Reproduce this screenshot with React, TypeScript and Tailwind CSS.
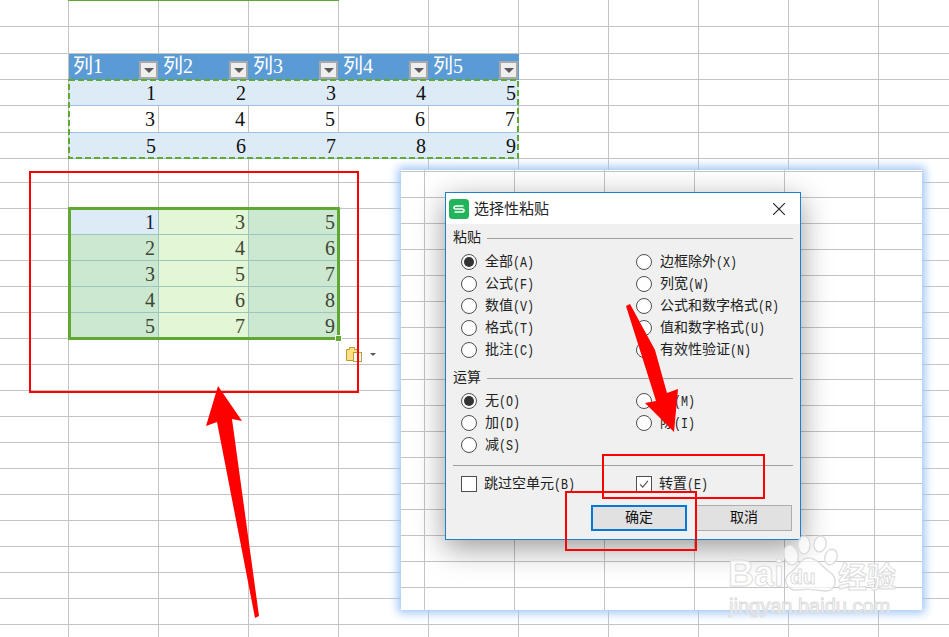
const CJK = "font-['Liberation_Mono','Noto_Sans_CJK_SC',monospace]";

// row heights follow the screenshot, which is two spliced captures
const sheetRows =
  'grid-rows-[27px_27px_26px_26px_27px_26px_24px_26px_26px_26px_26px_26px_26px_26px_26px_26px_26px_26px_26px_26px_26px_26px_26px_26px_26px_26px_26px]';

const headers = ['列1', '列2', '列3', '列4', '列5'];
const tableRows = [
  [1, 2, 3, 4, 5],
  [3, 4, 5, 6, 7],
  [5, 6, 7, 8, 9],
];
const pasted = [
  [1, 3, 5],
  [2, 4, 6],
  [3, 5, 7],
  [4, 6, 8],
  [5, 7, 9],
];

function FilterButton() {
  return (
    <span className="mr-px flex h-[18px] w-[19px] items-center justify-center border-2 border-[#a9a9a9] bg-[#eeeeee]">
      <span className="h-0 w-0 border-x-[5px] border-t-[5px] border-x-transparent border-t-[#595959]" />
    </span>
  );
}

function EmptyCells({ count }: { count: number }) {
  return (
    <>
      {Array.from({ length: count }).map((_, i) => (
        <div key={i} className="border-r border-b border-[#c4c4c4]" />
      ))}
    </>
  );
}

function NumberCell({ value, className }: { value: number; className: string }) {
  return (
    <div className={`flex items-center justify-end pr-[3px] font-['Liberation_Serif',serif] text-[20px] leading-none ${className}`}>
      {value}
    </div>
  );
}

function MainSheet() {
  return (
    <div className={`grid grid-cols-[69px_repeat(10,90px)] ${sheetRows}`}>
      <EmptyCells count={22} />

      <div className="border-r border-b border-[#c4c4c4]" />
      {headers.map((h) => (
        <div key={h} className="flex items-end justify-between bg-[#5b9bd5] pb-px pl-[4px] font-['Liberation_Serif','Noto_Sans_CJK_SC',serif] text-[20px] leading-[26px] text-white">
          <span>{h}</span>
          <FilterButton />
        </div>
      ))}
      <EmptyCells count={5} />

      {tableRows.map((row, r) => (
        <div key={r} className="contents">
          <div className="border-r border-b border-[#c4c4c4]" />
          {row.map((n, c) => (
            <NumberCell
              key={c}
              value={n}
              className={`border-b border-[#9bc2e6] text-[#111] ${r % 2 === 0 ? 'bg-[#ddebf7]' : 'border-r border-r-[#c4c4c4] bg-white'}`}
            />
          ))}
          <EmptyCells count={5} />
        </div>
      ))}

      <EmptyCells count={22} />

      {pasted.map((row, r) => (
        <div key={r} className="contents">
          <div className="border-r border-b border-[#c4c4c4]" />
          {row.map((n, c) => (
            <NumberCell
              key={c}
              value={n}
              className={`border-r border-b border-[#9cc5c0] ${
                r === 0 && c === 0
                  ? 'bg-[#ddebf7] text-[#14233a]'
                  : c === 1
                    ? 'bg-[#e3f6d6] text-[#3c4634]'
                    : 'bg-[#cce8d0] text-[#3c4634]'
              }`}
            />
          ))}
          <EmptyCells count={7} />
        </div>
      ))}

      <EmptyCells count={11 * 12} />
    </div>
  );
}

function PanelSheet() {
  return (
    <div className="grid grid-cols-[24px_repeat(6,90px)] grid-rows-[2px_26px_26px_26px_26px_26px_26px_26px_26px_26px_26px_26px_26px_26px_26px_26px_26px_26px_26px]">
      <EmptyCells count={7 * 19} />
    </div>
  );
}

function Label({ label, hint }: { label: string; hint: string }) {
  return (
    <span className={`${CJK} text-[14px] leading-none whitespace-nowrap text-[#222]`}>
      {label}
      <span className="inline-block scale-y-125 text-[11.67px]">({hint})</span>
    </span>
  );
}

function Radio({ label, hint, checked }: { label: string; hint: string; checked?: boolean }) {
  return (
    <div className="flex h-[22px] items-center gap-2">
      <span className="flex size-4 items-center justify-center rounded-full border-[1.5px] border-[#4f4f4f] bg-white">
        {checked && <span className="size-2.5 rounded-full bg-[#333]" />}
      </span>
      <Label label={label} hint={hint} />
    </div>
  );
}

function Group({ title }: { title: string }) {
  return (
    <div className="flex items-center gap-1.5">
      <span className={`${CJK} text-[14px] leading-none text-[#222]`}>{title}</span>
      <span className="h-px flex-1 bg-[#a0a0a0]" />
    </div>
  );
}

function Checkbox({ label, hint, checked }: { label: string; hint: string; checked?: boolean }) {
  return (
    <div className="flex items-center gap-[7px]">
      <span className="flex size-4 items-center justify-center border border-[#4f4f4f] bg-white">
        {checked && (
          <svg viewBox="0 0 16 16" className="size-4">
            <path d="M3.5 8.5 L6.5 11.5 L12.5 4.5" fill="none" stroke="#555" strokeWidth="1.4" />
          </svg>
        )}
      </span>
      <Label label={label} hint={hint} />
    </div>
  );
}

function PasteDialog() {
  return (
    <div className="absolute top-[192px] left-[445px] flex h-[348px] w-[356px] flex-col border border-[#1a80d0] bg-[#f0f0f0] shadow-[0_8px_28px_rgba(0,0,0,0.4)]">
      <div className="flex h-[31px] items-center bg-white pr-[15px] pl-[3px]">
        <svg viewBox="0 0 20 20" className="size-5">
          <rect width="20" height="20" rx="3.5" fill="#22b45a" />
          <path d="M14.5 7 H7 Q5 7 5 8.7 Q5 10 7 10 H13 Q15 10 15 11.5 Q15 13 13 13 H5.5" fill="none" stroke="#fff" strokeWidth="1.6" />
        </svg>
        <span className="ml-[5px] flex-1 font-['Noto_Sans_CJK_SC',sans-serif] text-[15px] text-[#222]">选择性粘贴</span>
        <svg viewBox="0 0 12 12" className="size-3">
          <path d="M0 0 L12 12 M12 0 L0 12" stroke="#222" strokeWidth="1.1" />
        </svg>
      </div>

      <div className="flex flex-1 flex-col pt-[7px] pr-[7px] pl-[7px]">
        <Group title="粘贴" />
        <div className="mt-[6px] grid grid-cols-[175px_1fr] pl-2">
          <div>
            <Radio label="全部" hint="A" checked />
            <Radio label="公式" hint="F" />
            <Radio label="数值" hint="V" />
            <Radio label="格式" hint="T" />
            <Radio label="批注" hint="C" />
          </div>
          <div>
            <Radio label="边框除外" hint="X" />
            <Radio label="列宽" hint="W" />
            <Radio label="公式和数字格式" hint="R" />
            <Radio label="值和数字格式" hint="U" />
            <Radio label="有效性验证" hint="N" />
          </div>
        </div>

        <div className="mt-[10px]">
          <Group title="运算" />
        </div>
        <div className="mt-[5px] grid grid-cols-[175px_1fr] pl-2">
          <div>
            <Radio label="无" hint="O" checked />
            <Radio label="加" hint="D" />
            <Radio label="减" hint="S" />
          </div>
          <div>
            <Radio label="乘" hint="M" />
            <Radio label="除" hint="I" />
          </div>
        </div>

        <div className="mt-[9px] h-px bg-[#a0a0a0]" />
        <div className="mt-[10px] grid grid-cols-[175px_1fr] pl-2">
          <Checkbox label="跳过空单元" hint="B" />
          <Checkbox label="转置" hint="E" checked />
        </div>

        <div className="mt-[13px] mr-px flex justify-end gap-[9px]">
          <button className={`h-[26px] w-[96px] border-2 border-[#0078d7] bg-[#e1e1e1] ${CJK} text-[14px] text-[#111]`}>确定</button>
          <button className={`h-[26px] w-[96px] border border-[#adadad] bg-[#e1e1e1] ${CJK} text-[14px] text-[#111]`}>取消</button>
        </div>
      </div>
    </div>
  );
}

function Watermark() {
  const outline = '[-webkit-text-stroke:1px_#dcdcdc] text-white/80';
  return (
    <div className="absolute top-[535px] left-[726px] h-[82px] w-[172px] font-['Liberation_Sans',sans-serif]">
      <svg viewBox="0 0 172 60" className="absolute top-0 left-0 h-[60px] w-[172px]">
        <g fill="#fff" fillOpacity="0.7" stroke="#dcdcdc" strokeWidth="1.4">
          <ellipse cx="65" cy="20" rx="7" ry="10" transform="rotate(-15 65 20)" />
          <ellipse cx="78" cy="10" rx="6" ry="9" />
          <ellipse cx="94" cy="9" rx="6" ry="8" transform="rotate(10 94 9)" />
          <ellipse cx="105" cy="22" rx="6" ry="8" transform="rotate(20 105 22)" />
          <path d="M82 23 C74 23 72 33 64 38 C56 44 60 56 72 55 C80 54 88 54 98 56 C110 57 112 44 105 38 C96 32 92 23 82 23 Z" />
        </g>
      </svg>
      <span className={`absolute top-[21px] left-[2px] text-[36px] leading-none font-bold ${outline}`}>Bai</span>
      <span className={`absolute top-[31px] left-[64px] text-[21px] leading-none font-bold ${outline}`}>du</span>
      <span className={`absolute top-[26px] left-[112px] font-['Noto_Sans_CJK_SC',sans-serif] text-[29px] leading-none font-bold ${outline}`}>经验</span>
      <span className={`absolute top-[61px] left-[3px] text-[20px] leading-none whitespace-nowrap ${outline}`}>jingyan.baidu.com</span>
    </div>
  );
}

export default function App() {
  return (
    <div className="relative h-[637px] w-[949px] overflow-hidden bg-white">
      <MainSheet />

      {/* previous selection edge, top of the capture */}
      <div className="absolute top-0 left-[68px] h-px w-[271px] bg-[#5fa832]" />

      {/* marching ants around the copied table */}
      <svg className="absolute top-[79px] left-[68px] h-[80px] w-[451px]" viewBox="0 0 451 80">
        <rect x="1" y="1" width="449" height="78" fill="none" stroke="#5fa832" strokeWidth="2" strokeDasharray="6 3" />
      </svg>

      {/* pasted range */}
      <div className="absolute top-[207px] left-[68px] h-[133px] w-[272px] border-[3px] border-[#5fa832]" />
      <div className="absolute top-[335px] left-[335px] size-[7px] border border-white bg-[#5fa832]" />
      <svg className="absolute top-[345px] left-[345px] h-[18px] w-[32px]" viewBox="0 0 32 18">
        <path d="M1.5 4.5 H4.5 V2.5 H9.5 V4.5 H12.5 V15.5 H1.5 Z" fill="#ffdf80" stroke="#bf9a30" />
        <rect x="8.5" y="7.5" width="8" height="9" fill="#fff" stroke="#bf9a30" />
        <path d="M25 8 H31 L28 11 Z" fill="#595959" />
      </svg>

      <div className="absolute top-[170px] left-[401px] h-[440px] w-[521px] overflow-hidden bg-white shadow-[0_0_9px_3px_#9cc4f7]">
        <PanelSheet />
      </div>

      <PasteDialog />
      <Watermark />

      {/* annotations drawn on top of the screenshot */}
      <div className="absolute top-[171px] left-[29px] h-[222px] w-[330px] border-2 border-[#ff0000]" />
      <div className="absolute top-[454px] left-[602px] h-[45px] w-[163px] border-2 border-[#ff0000]" />
      <div className="absolute top-[491px] left-[565px] h-[60px] w-[132px] border-2 border-[#ff0000]" />
      <svg className="absolute top-0 left-0 h-[637px] w-[949px]" viewBox="0 0 949 637">
        <polygon points="218,386 242,421 232,419 259,616 255,618 217,422 206,426" fill="#ff0000" />
        <polygon points="626,306 630,304 655,350 667,393 678,389 674,432 645,403 656,401" fill="#ff0000" />
      </svg>
    </div>
  );
}
